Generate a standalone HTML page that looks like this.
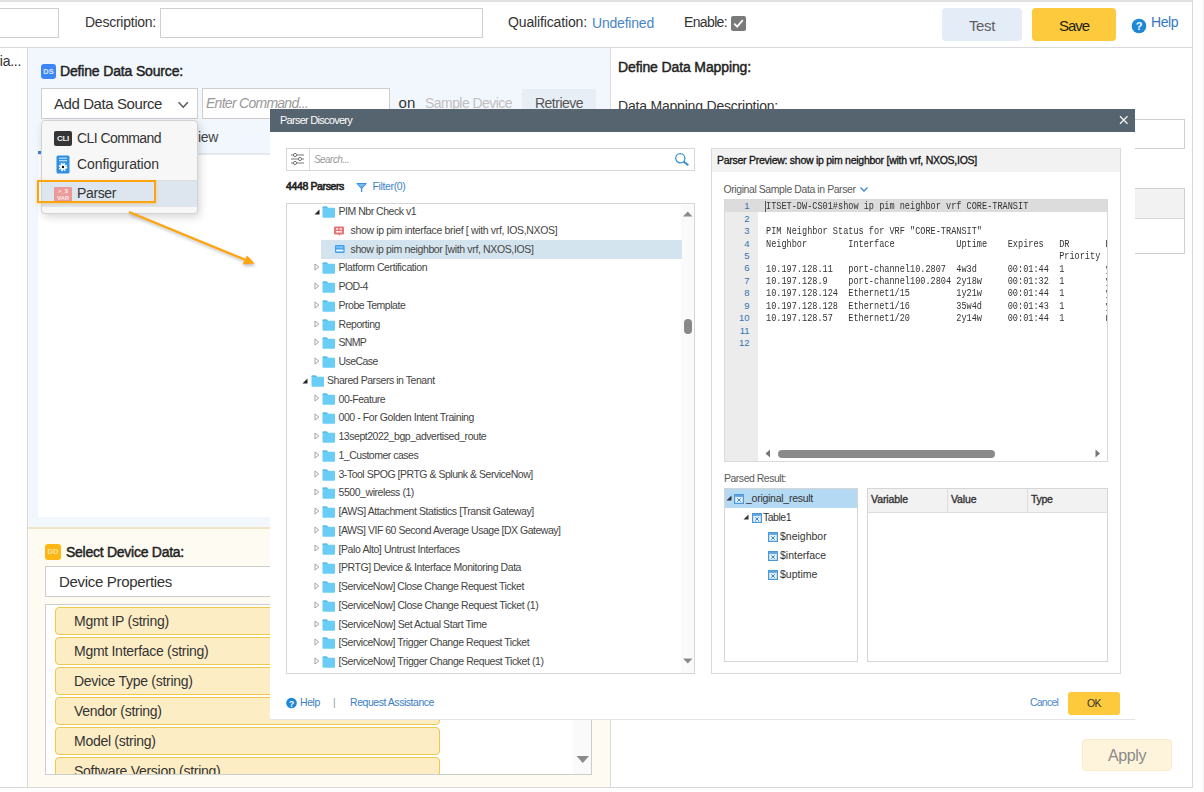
<!DOCTYPE html>
<html><head><meta charset="utf-8"><title>Parser Discovery</title><style>html,body{margin:0;padding:0;}
body{width:1204px;height:792px;position:relative;overflow:hidden;background:#fff;font-family:"Liberation Sans", sans-serif;}
.b{position:absolute;box-sizing:border-box;}
.t{position:absolute;white-space:pre;line-height:1;}
</style></head><body>
<div class="b" style="left:0px;top:0px;width:1193px;height:2px;background:#e0e0e0;"></div>
<div class="b" style="left:1203px;top:0px;width:1px;height:792px;background:#f1f1f1;"></div>
<div class="b" style="left:-2px;top:8px;width:61px;height:30px;background:#fff;border:1px solid #cfcfcf;"></div>
<div class="t" style="left:85px;top:15.15px;font-size:14px;color:#333;letter-spacing:-0.243px;">Description:</div>
<div class="b" style="left:160px;top:8px;width:323px;height:30px;background:#fff;border:1px solid #cfcfcf;"></div>
<div class="t" style="left:508px;top:15.15px;font-size:14px;color:#333;letter-spacing:-0.138px;">Qualification:</div>
<div class="t" style="left:592px;top:16.15px;font-size:14px;color:#4a86c5;letter-spacing:-0.203px;">Undefined</div>
<div class="t" style="left:684px;top:15.15px;font-size:14px;color:#333;letter-spacing:-0.641px;">Enable:</div>
<div class="b" style="left:731px;top:16px;width:15px;height:15px;background:#7a7a7a;border-radius:2px;"><svg width="15" height="15" style="position:absolute;left:0;top:0"><path d="M3.2 7.6 L6.2 10.6 L11.8 4.2" stroke="#fff" stroke-width="1.8" fill="none"/></svg></div>
<div class="b" style="left:942px;top:8px;width:80px;height:33px;background:#e4ecf8;border-radius:4px;"></div>
<div class="t" style="left:969px;top:18.30px;font-size:15px;color:#5f5f5f;letter-spacing:-0.379px;">Test</div>
<div class="b" style="left:1032px;top:8px;width:84px;height:33px;background:#fdc93d;border-radius:4px;"></div>
<div class="t" style="left:1059px;top:18.30px;font-size:15px;color:#222;letter-spacing:-1.051px;">Save</div>
<svg class="b" style="left:1131px;top:18px" width="16" height="16"><circle cx="8" cy="8" r="7.3" fill="#1e88d8"/><text x="8" y="12.3" font-size="11" font-weight="700" fill="#fff" text-anchor="middle" font-family="Liberation Sans">?</text></svg>
<div class="t" style="left:1151px;top:15.45px;font-size:14px;color:#3578c0;letter-spacing:-0.449px;">Help</div>
<div class="b" style="left:0px;top:47px;width:1193px;height:1px;background:#d9d9d9;"></div>
<div class="b" style="left:1192px;top:1px;width:1px;height:787px;background:#d9d9d9;"></div>
<div class="b" style="left:0px;top:787px;width:1193px;height:1px;background:#d9d9d9;"></div>
<div class="b" style="left:27px;top:48px;width:1px;height:740px;background:#d9d9d9;"></div>
<div class="t" style="left:-4.5px;top:54.15px;font-size:14px;color:#333;letter-spacing:-0.289px;">ria...</div>
<div class="b" style="left:28px;top:48px;width:582px;height:479px;background:#f2f7fd;"></div>
<div class="b" style="left:610px;top:48px;width:1px;height:740px;background:#dcdcdc;"></div>
<div class="b" style="left:38px;top:155px;width:561px;height:362px;background:#fff;"></div>
<div class="b" style="left:38px;top:153px;width:561px;height:2px;background:#e4e8ed;"></div>
<div class="b" style="left:38px;top:151px;width:4px;height:3px;background:#3a86d6;"></div>
<div class="t" style="left:198px;top:130.15px;font-size:14px;color:#444;letter-spacing:-0.339px;">iew</div>
<div class="b" style="left:41px;top:64px;width:15px;height:15px;background:#3d86f8;border-radius:3px;"><div style="position:absolute;left:0;top:3.5px;width:15px;text-align:center;font:bold 7.5px Liberation Sans;color:#dce9fd;line-height:8px">DS</div></div>
<div class="t" style="left:60px;top:64.15px;font-size:14px;color:#222;letter-spacing:-0.162px;-webkit-text-stroke:0.45px #222;">Define Data Source:</div>
<div class="b" style="left:41px;top:88px;width:157px;height:31px;background:#fff;border:1px solid #cdcdcd;"></div>
<div class="t" style="left:54px;top:95.80px;font-size:15px;color:#333;letter-spacing:-0.417px;">Add Data Source</div>
<svg class="b" style="left:176px;top:99px" width="14" height="11"><path d="M2.6 3.3 L7.2 8.2 L11.8 3.3" stroke="#555" stroke-width="1.4" fill="none"/></svg>
<div class="b" style="left:202px;top:88px;width:188px;height:31px;background:#fff;border:1px solid #cdcdcd;"></div>
<div class="t" style="left:206px;top:96.15px;font-size:14px;color:#9a9a9a;font-style:italic;letter-spacing:-0.726px;">Enter Command...</div>
<div class="t" style="left:398.5px;top:95.30px;font-size:15px;color:#333;letter-spacing:0.156px;">on</div>
<div class="t" style="left:425px;top:96.15px;font-size:14px;color:#c0c0c0;letter-spacing:-0.550px;">Sample Device</div>
<div class="b" style="left:522px;top:89px;width:74px;height:30px;background:#e8eef6;border-radius:3px;"></div>
<div class="t" style="left:535px;top:96.15px;font-size:14px;color:#555;letter-spacing:-0.518px;">Retrieve</div>
<div class="b" style="left:28px;top:527px;width:582px;height:260px;background:#fefbf3;"></div>
<div class="b" style="left:28px;top:527px;width:582px;height:2px;background:#f1e4c6;"></div>
<div class="b" style="left:45px;top:544px;width:16px;height:16px;background:#fdb715;border-radius:3px;"><div style="position:absolute;left:0;top:4px;width:16px;text-align:center;font:bold 7.5px Liberation Sans;color:#fde3a0;line-height:8px">DD</div></div>
<div class="t" style="left:66px;top:545.15px;font-size:14px;color:#222;letter-spacing:-0.261px;-webkit-text-stroke:0.45px #222;">Select Device Data:</div>
<div class="b" style="left:45px;top:566px;width:548px;height:31px;background:#fff;border:1px solid #cdcdcd;"></div>
<div class="t" style="left:59px;top:574.30px;font-size:15px;color:#333;letter-spacing:-0.317px;">Device Properties</div>
<div class="b" style="left:45px;top:604px;width:547px;height:171px;background:#fff;border:1px solid #cdcdcd;"></div>
<div class="b" style="left:573px;top:605px;width:18px;height:169px;background:#fafafa;"></div>
<svg class="b" style="left:576px;top:756px" width="14" height="8"><path d="M0.5 0 L13 0 L6.75 7 Z" fill="#8a8a8a"/></svg>
<div class="b" style="left:46px;top:605px;width:527px;height:169px;overflow:hidden">
<div class="b" style="left:9px;top:2px;width:385px;height:28px;box-sizing:border-box;background:#fdedc4;border:1px solid #efc94c;border-radius:4px"></div>
<div class="t" style="left:28px;top:8.65px;font-size:14px;color:#333;letter-spacing:-0.279px;">Mgmt IP (string)</div>
<div class="b" style="left:9px;top:32px;width:385px;height:28px;box-sizing:border-box;background:#fdedc4;border:1px solid #efc94c;border-radius:4px"></div>
<div class="t" style="left:28px;top:38.65px;font-size:14px;color:#333;letter-spacing:-0.276px;">Mgmt Interface (string)</div>
<div class="b" style="left:9px;top:62px;width:385px;height:28px;box-sizing:border-box;background:#fdedc4;border:1px solid #efc94c;border-radius:4px"></div>
<div class="t" style="left:28px;top:68.65px;font-size:14px;color:#333;letter-spacing:-0.280px;">Device Type (string)</div>
<div class="b" style="left:9px;top:92px;width:385px;height:28px;box-sizing:border-box;background:#fdedc4;border:1px solid #efc94c;border-radius:4px"></div>
<div class="t" style="left:28px;top:98.65px;font-size:14px;color:#333;letter-spacing:-0.275px;">Vendor (string)</div>
<div class="b" style="left:9px;top:122px;width:385px;height:28px;box-sizing:border-box;background:#fdedc4;border:1px solid #efc94c;border-radius:4px"></div>
<div class="t" style="left:28px;top:128.65px;font-size:14px;color:#333;letter-spacing:-0.275px;">Model (string)</div>
<div class="b" style="left:9px;top:152px;width:385px;height:28px;box-sizing:border-box;background:#fdedc4;border:1px solid #efc94c;border-radius:4px"></div>
<div class="t" style="left:28px;top:158.65px;font-size:14px;color:#333;letter-spacing:-0.276px;">Software Version (string)</div>
</div>
<div class="t" style="left:618px;top:59.65px;font-size:14px;color:#222;letter-spacing:-0.121px;-webkit-text-stroke:0.45px #222;">Define Data Mapping:</div>
<div class="t" style="left:618px;top:99.15px;font-size:14px;color:#333;letter-spacing:-0.199px;">Data Mapping Description:</div>
<div class="b" style="left:1050px;top:119px;width:135px;height:30px;background:#fff;border:1px solid #cfcfcf;"></div>
<div class="b" style="left:1050px;top:188px;width:135px;height:66px;background:#fff;border:1px solid #cfcfcf;"></div>
<div class="b" style="left:1051px;top:189px;width:133px;height:30px;background:#f2f2f2;"></div>
<div class="b" style="left:1051px;top:218px;width:133px;height:1px;background:#d8d8d8;"></div>
<div class="b" style="left:1082px;top:739px;width:90px;height:32px;background:#fef4dc;border:1px solid #fcebc6;border-radius:4px;"></div>
<div class="t" style="left:1108px;top:748.46px;font-size:16px;color:#8a8a8a;letter-spacing:-0.406px;">Apply</div>
<div class="b" style="left:41px;top:120px;width:157px;height:94px;box-sizing:border-box;background:#f7f7f7;border:1px solid #d2d2d2;border-radius:4px;box-shadow:2px 3px 8px rgba(0,0,0,0.16)"></div>
<div class="b" style="left:54px;top:131px;width:18px;height:15px;background:#353535;border-radius:2px;"><div style="position:absolute;left:0;top:3.5px;width:18px;text-align:center;font:bold 8px Liberation Sans;color:#eee;line-height:8px;letter-spacing:-0.3px">CLI</div></div>
<div class="t" style="left:77px;top:131.15px;font-size:14px;color:#333;letter-spacing:-0.570px;">CLI Command</div>
<svg class="b" style="left:56px;top:155px" width="14" height="19"><rect x="0.5" y="0.5" width="13" height="18" rx="1.5" fill="#2f8fe0"/><rect x="3" y="2.6" width="8" height="1.3" fill="#b5d8f7"/><rect x="3" y="5" width="8" height="1.3" fill="#b5d8f7"/><circle cx="7" cy="12" r="3" fill="#fff"/><circle cx="7" cy="12" r="3.6" fill="none" stroke="#fff" stroke-width="1.3" stroke-dasharray="1.7 1.13"/><circle cx="7" cy="12" r="1.2" fill="#111"/></svg>
<div class="t" style="left:77px;top:157.15px;font-size:14px;color:#333;letter-spacing:-0.099px;">Configuration</div>
<div class="b" style="left:42px;top:180px;width:155px;height:1px;background:#dedede;"></div>
<div class="b" style="left:42px;top:181px;width:155px;height:26px;background:#dde6ee;"></div>
<div class="b" style="left:54px;top:187px;width:18px;height:15px;background:#ea9a9a;border-radius:1px;"><div style="position:absolute;left:0;top:1px;width:18px;text-align:center;font:bold 6px Liberation Sans;color:#fde8e8;line-height:6.5px">&gt;_$<br>VAR</div></div>
<div class="t" style="left:77px;top:186.15px;font-size:14px;color:#333;letter-spacing:-0.372px;">Parser</div>
<div class="b" style="left:37px;top:180px;width:119px;height:23px;border:2px solid #fda40f;box-shadow:0 1px 3px rgba(246,162,30,0.4);"></div>
<svg class="b" style="left:0;top:0;filter:drop-shadow(1px 2px 1.5px rgba(0,0,0,0.25))" width="300" height="300"><line x1="129" y1="212" x2="247" y2="260.5" stroke="#fda40f" stroke-width="2.4"/><path d="M254.5 263.5 L242.5 264.5 L247 255.5 Z" fill="#fda40f"/></svg>
<div class="b" style="left:270px;top:109px;width:865px;height:610px;background:#fff;"></div>
<div class="b" style="left:270px;top:109px;width:865px;height:23px;background:#566470;"></div>
<div class="t" style="left:280px;top:114.69px;font-size:11px;color:#fff;letter-spacing:-0.734px;">Parser Discovery</div>
<svg class="b" style="left:1119px;top:115px" width="10" height="10"><path d="M1 1.2 L8.5 8.8 M8.5 1.2 L1 8.8" stroke="#f4f4f4" stroke-width="1.3"/></svg>
<div class="b" style="left:286px;top:148px;width:409px;height:23px;background:#fff;border:1px solid #d6d6d6;"></div>
<div class="b" style="left:309px;top:149px;width:1px;height:21px;background:#dcdcdc;"></div>
<svg class="b" style="left:291px;top:153px" width="14" height="12"><g stroke="#777" stroke-width="1" fill="#fff"><line x1="0" y1="2" x2="13" y2="2"/><line x1="0" y1="6" x2="13" y2="6"/><line x1="0" y1="10" x2="13" y2="10"/><circle cx="4" cy="2" r="1.6"/><circle cx="9" cy="6" r="1.6"/><circle cx="4" cy="10" r="1.6"/></g></svg>
<div class="t" style="left:314px;top:154.53px;font-size:10px;color:#9a9a9a;font-style:italic;letter-spacing:-0.559px;">Search...</div>
<svg class="b" style="left:674px;top:151.5px" width="16" height="16"><circle cx="6.3" cy="6.2" r="4.6" stroke="#3d95cf" stroke-width="1.3" fill="none"/><line x1="9.6" y1="9.6" x2="14.3" y2="13.3" stroke="#3d95cf" stroke-width="2"/></svg>
<div class="t" style="left:286px;top:181.11px;font-size:10.5px;color:#222;letter-spacing:-0.371px;-webkit-text-stroke:0.6px #222;">4448 Parsers</div>
<svg class="b" style="left:356px;top:182px" width="12" height="12"><path d="M1 1.5 L10.2 1.5 L5.6 6.5 Z" fill="#78b8f4" stroke="#3d8fe0" stroke-width="1.1" stroke-linejoin="round"/><rect x="4.95" y="6" width="1.3" height="4" fill="#3d8fe0"/></svg>
<div class="t" style="left:372.5px;top:181.11px;font-size:10.5px;color:#3d84c6;letter-spacing:-0.352px;">Filter(0)</div>
<div class="b" style="left:286px;top:203px;width:409px;height:471px;background:#fff;border:1px solid #d6d6d6;"></div>
<div class="b" style="left:681px;top:205px;width:13px;height:468px;background:#fafafa;"></div>
<svg class="b" style="left:683px;top:211px" width="10" height="6"><path d="M0 5.5 L9.5 5.5 L4.75 0.5 Z" fill="#8a8a8a"/></svg>
<svg class="b" style="left:683px;top:658px" width="10" height="6"><path d="M0 0.5 L9.5 0.5 L4.75 5.5 Z" fill="#8a8a8a"/></svg>
<div class="b" style="left:684px;top:319px;width:8px;height:15px;background:#888;border-radius:4px;"></div>
<div class="b" style="left:321px;top:240px;width:361px;height:19px;background:#d4e4ee;"></div>
<svg class="b" style="left:314px;top:209px" width="6" height="6"><path d="M5.5 0.5 L5.5 5.5 L0.5 5.5 Z" fill="#222"/></svg>
<svg class="b" style="left:322px;top:206px" width="14" height="12"><path d="M0.5 1.5 Q0.5 0.5 1.5 0.5 L4.8 0.5 L6 1.8 L12.2 1.8 Q13 1.8 13 2.8 L13 10.8 Q13 11.8 12 11.8 L1.5 11.8 Q0.5 11.8 0.5 10.8 Z" fill="#6acdf6"/><path d="M0.5 1.5 Q0.5 0.5 1.5 0.5 L4.8 0.5 L6 1.8 L0.5 1.8 Z" fill="#55b6e6"/></svg>
<div class="t" style="left:338.5px;top:206.11px;font-size:10.5px;color:#444;letter-spacing:-0.479px;">PIM Nbr Check v1</div>
<svg class="b" style="left:334px;top:226px" width="11" height="11"><path d="M1 0.5 L9 0.5 Q10 0.5 10 1.5 L10 7.5 Q10 8.5 9 8.5 L6.3 8.5 L5.2 9.8 L4.6 8.5 L1 8.5 Q0 8.5 0 7.5 L0 1.5 Q0 0.5 1 0.5 Z" fill="#e27676"/><rect x="2" y="2.2" width="2" height="1.6" fill="#fbe3e3"/><rect x="5.5" y="2.2" width="2.5" height="1.6" fill="#fbe3e3"/><rect x="2" y="5" width="6" height="1.6" fill="#fbe3e3"/></svg>
<div class="t" style="left:350.5px;top:224.86px;font-size:10.5px;color:#444;letter-spacing:-0.342px;">show ip pim interface brief [ with vrf, IOS,NXOS]</div>
<svg class="b" style="left:334.5px;top:245px" width="10" height="9"><rect x="0" y="0" width="9.6" height="8" rx="1" fill="#3f9ff0"/><rect x="1.2" y="1.2" width="7" height="2" fill="#7cc2f7"/><rect x="1.2" y="4.5" width="7.2" height="2" fill="#fff" opacity="0.9"/></svg>
<div class="t" style="left:350.5px;top:243.61px;font-size:10.5px;color:#444;letter-spacing:-0.362px;">show ip pim neighbor [with vrf, NXOS,IOS]</div>
<svg class="b" style="left:314px;top:263px" width="6" height="8"><path d="M1 1 L4.8 4 L1 7 Z" stroke="#999" stroke-width="0.9" fill="#fff"/></svg>
<svg class="b" style="left:322px;top:262px" width="14" height="12"><path d="M0.5 1.5 Q0.5 0.5 1.5 0.5 L4.8 0.5 L6 1.8 L12.2 1.8 Q13 1.8 13 2.8 L13 10.8 Q13 11.8 12 11.8 L1.5 11.8 Q0.5 11.8 0.5 10.8 Z" fill="#6acdf6"/><path d="M0.5 1.5 Q0.5 0.5 1.5 0.5 L4.8 0.5 L6 1.8 L0.5 1.8 Z" fill="#55b6e6"/></svg>
<div class="t" style="left:338.5px;top:262.36px;font-size:10.5px;color:#444;letter-spacing:-0.399px;">Platform Certification</div>
<svg class="b" style="left:314px;top:282px" width="6" height="8"><path d="M1 1 L4.8 4 L1 7 Z" stroke="#999" stroke-width="0.9" fill="#fff"/></svg>
<svg class="b" style="left:322px;top:281px" width="14" height="12"><path d="M0.5 1.5 Q0.5 0.5 1.5 0.5 L4.8 0.5 L6 1.8 L12.2 1.8 Q13 1.8 13 2.8 L13 10.8 Q13 11.8 12 11.8 L1.5 11.8 Q0.5 11.8 0.5 10.8 Z" fill="#6acdf6"/><path d="M0.5 1.5 Q0.5 0.5 1.5 0.5 L4.8 0.5 L6 1.8 L0.5 1.8 Z" fill="#55b6e6"/></svg>
<div class="t" style="left:338.5px;top:281.11px;font-size:10.5px;color:#444;letter-spacing:-0.578px;">POD-4</div>
<svg class="b" style="left:314px;top:301px" width="6" height="8"><path d="M1 1 L4.8 4 L1 7 Z" stroke="#999" stroke-width="0.9" fill="#fff"/></svg>
<svg class="b" style="left:322px;top:300px" width="14" height="12"><path d="M0.5 1.5 Q0.5 0.5 1.5 0.5 L4.8 0.5 L6 1.8 L12.2 1.8 Q13 1.8 13 2.8 L13 10.8 Q13 11.8 12 11.8 L1.5 11.8 Q0.5 11.8 0.5 10.8 Z" fill="#6acdf6"/><path d="M0.5 1.5 Q0.5 0.5 1.5 0.5 L4.8 0.5 L6 1.8 L0.5 1.8 Z" fill="#55b6e6"/></svg>
<div class="t" style="left:338.5px;top:299.86px;font-size:10.5px;color:#444;letter-spacing:-0.472px;">Probe Template</div>
<svg class="b" style="left:314px;top:320px" width="6" height="8"><path d="M1 1 L4.8 4 L1 7 Z" stroke="#999" stroke-width="0.9" fill="#fff"/></svg>
<svg class="b" style="left:322px;top:319px" width="14" height="12"><path d="M0.5 1.5 Q0.5 0.5 1.5 0.5 L4.8 0.5 L6 1.8 L12.2 1.8 Q13 1.8 13 2.8 L13 10.8 Q13 11.8 12 11.8 L1.5 11.8 Q0.5 11.8 0.5 10.8 Z" fill="#6acdf6"/><path d="M0.5 1.5 Q0.5 0.5 1.5 0.5 L4.8 0.5 L6 1.8 L0.5 1.8 Z" fill="#55b6e6"/></svg>
<div class="t" style="left:338.5px;top:318.61px;font-size:10.5px;color:#444;letter-spacing:-0.455px;">Reporting</div>
<svg class="b" style="left:314px;top:338px" width="6" height="8"><path d="M1 1 L4.8 4 L1 7 Z" stroke="#999" stroke-width="0.9" fill="#fff"/></svg>
<svg class="b" style="left:322px;top:337px" width="14" height="12"><path d="M0.5 1.5 Q0.5 0.5 1.5 0.5 L4.8 0.5 L6 1.8 L12.2 1.8 Q13 1.8 13 2.8 L13 10.8 Q13 11.8 12 11.8 L1.5 11.8 Q0.5 11.8 0.5 10.8 Z" fill="#6acdf6"/><path d="M0.5 1.5 Q0.5 0.5 1.5 0.5 L4.8 0.5 L6 1.8 L0.5 1.8 Z" fill="#55b6e6"/></svg>
<div class="t" style="left:338.5px;top:337.36px;font-size:10.5px;color:#444;letter-spacing:-0.683px;">SNMP</div>
<svg class="b" style="left:314px;top:357px" width="6" height="8"><path d="M1 1 L4.8 4 L1 7 Z" stroke="#999" stroke-width="0.9" fill="#fff"/></svg>
<svg class="b" style="left:322px;top:356px" width="14" height="12"><path d="M0.5 1.5 Q0.5 0.5 1.5 0.5 L4.8 0.5 L6 1.8 L12.2 1.8 Q13 1.8 13 2.8 L13 10.8 Q13 11.8 12 11.8 L1.5 11.8 Q0.5 11.8 0.5 10.8 Z" fill="#6acdf6"/><path d="M0.5 1.5 Q0.5 0.5 1.5 0.5 L4.8 0.5 L6 1.8 L0.5 1.8 Z" fill="#55b6e6"/></svg>
<div class="t" style="left:338.5px;top:356.11px;font-size:10.5px;color:#444;letter-spacing:-0.555px;">UseCase</div>
<svg class="b" style="left:302px;top:378px" width="6" height="6"><path d="M5.5 0.5 L5.5 5.5 L0.5 5.5 Z" fill="#222"/></svg>
<svg class="b" style="left:311px;top:375px" width="14" height="12"><path d="M0.5 1.5 Q0.5 0.5 1.5 0.5 L4.8 0.5 L6 1.8 L12.2 1.8 Q13 1.8 13 2.8 L13 10.8 Q13 11.8 12 11.8 L1.5 11.8 Q0.5 11.8 0.5 10.8 Z" fill="#6acdf6"/><path d="M0.5 1.5 Q0.5 0.5 1.5 0.5 L4.8 0.5 L6 1.8 L0.5 1.8 Z" fill="#55b6e6"/></svg>
<div class="t" style="left:327px;top:374.86px;font-size:10.5px;color:#444;letter-spacing:-0.444px;">Shared Parsers in Tenant</div>
<svg class="b" style="left:314px;top:394px" width="6" height="8"><path d="M1 1 L4.8 4 L1 7 Z" stroke="#999" stroke-width="0.9" fill="#fff"/></svg>
<svg class="b" style="left:322px;top:393px" width="14" height="12"><path d="M0.5 1.5 Q0.5 0.5 1.5 0.5 L4.8 0.5 L6 1.8 L12.2 1.8 Q13 1.8 13 2.8 L13 10.8 Q13 11.8 12 11.8 L1.5 11.8 Q0.5 11.8 0.5 10.8 Z" fill="#6acdf6"/><path d="M0.5 1.5 Q0.5 0.5 1.5 0.5 L4.8 0.5 L6 1.8 L0.5 1.8 Z" fill="#55b6e6"/></svg>
<div class="t" style="left:338.5px;top:393.61px;font-size:10.5px;color:#444;letter-spacing:-0.462px;">00-Feature</div>
<svg class="b" style="left:314px;top:413px" width="6" height="8"><path d="M1 1 L4.8 4 L1 7 Z" stroke="#999" stroke-width="0.9" fill="#fff"/></svg>
<svg class="b" style="left:322px;top:412px" width="14" height="12"><path d="M0.5 1.5 Q0.5 0.5 1.5 0.5 L4.8 0.5 L6 1.8 L12.2 1.8 Q13 1.8 13 2.8 L13 10.8 Q13 11.8 12 11.8 L1.5 11.8 Q0.5 11.8 0.5 10.8 Z" fill="#6acdf6"/><path d="M0.5 1.5 Q0.5 0.5 1.5 0.5 L4.8 0.5 L6 1.8 L0.5 1.8 Z" fill="#55b6e6"/></svg>
<div class="t" style="left:338.5px;top:412.36px;font-size:10.5px;color:#444;letter-spacing:-0.419px;">000 - For Golden Intent Training</div>
<svg class="b" style="left:314px;top:432px" width="6" height="8"><path d="M1 1 L4.8 4 L1 7 Z" stroke="#999" stroke-width="0.9" fill="#fff"/></svg>
<svg class="b" style="left:322px;top:431px" width="14" height="12"><path d="M0.5 1.5 Q0.5 0.5 1.5 0.5 L4.8 0.5 L6 1.8 L12.2 1.8 Q13 1.8 13 2.8 L13 10.8 Q13 11.8 12 11.8 L1.5 11.8 Q0.5 11.8 0.5 10.8 Z" fill="#6acdf6"/><path d="M0.5 1.5 Q0.5 0.5 1.5 0.5 L4.8 0.5 L6 1.8 L0.5 1.8 Z" fill="#55b6e6"/></svg>
<div class="t" style="left:338.5px;top:431.11px;font-size:10.5px;color:#444;letter-spacing:-0.471px;">13sept2022_bgp_advertised_route</div>
<svg class="b" style="left:314px;top:451px" width="6" height="8"><path d="M1 1 L4.8 4 L1 7 Z" stroke="#999" stroke-width="0.9" fill="#fff"/></svg>
<svg class="b" style="left:322px;top:450px" width="14" height="12"><path d="M0.5 1.5 Q0.5 0.5 1.5 0.5 L4.8 0.5 L6 1.8 L12.2 1.8 Q13 1.8 13 2.8 L13 10.8 Q13 11.8 12 11.8 L1.5 11.8 Q0.5 11.8 0.5 10.8 Z" fill="#6acdf6"/><path d="M0.5 1.5 Q0.5 0.5 1.5 0.5 L4.8 0.5 L6 1.8 L0.5 1.8 Z" fill="#55b6e6"/></svg>
<div class="t" style="left:338.5px;top:449.86px;font-size:10.5px;color:#444;letter-spacing:-0.492px;">1_Customer cases</div>
<svg class="b" style="left:314px;top:470px" width="6" height="8"><path d="M1 1 L4.8 4 L1 7 Z" stroke="#999" stroke-width="0.9" fill="#fff"/></svg>
<svg class="b" style="left:322px;top:469px" width="14" height="12"><path d="M0.5 1.5 Q0.5 0.5 1.5 0.5 L4.8 0.5 L6 1.8 L12.2 1.8 Q13 1.8 13 2.8 L13 10.8 Q13 11.8 12 11.8 L1.5 11.8 Q0.5 11.8 0.5 10.8 Z" fill="#6acdf6"/><path d="M0.5 1.5 Q0.5 0.5 1.5 0.5 L4.8 0.5 L6 1.8 L0.5 1.8 Z" fill="#55b6e6"/></svg>
<div class="t" style="left:338.5px;top:468.61px;font-size:10.5px;color:#444;letter-spacing:-0.480px;">3-Tool SPOG [PRTG &amp; Splunk &amp; ServiceNow]</div>
<svg class="b" style="left:314px;top:488px" width="6" height="8"><path d="M1 1 L4.8 4 L1 7 Z" stroke="#999" stroke-width="0.9" fill="#fff"/></svg>
<svg class="b" style="left:322px;top:487px" width="14" height="12"><path d="M0.5 1.5 Q0.5 0.5 1.5 0.5 L4.8 0.5 L6 1.8 L12.2 1.8 Q13 1.8 13 2.8 L13 10.8 Q13 11.8 12 11.8 L1.5 11.8 Q0.5 11.8 0.5 10.8 Z" fill="#6acdf6"/><path d="M0.5 1.5 Q0.5 0.5 1.5 0.5 L4.8 0.5 L6 1.8 L0.5 1.8 Z" fill="#55b6e6"/></svg>
<div class="t" style="left:338.5px;top:487.36px;font-size:10.5px;color:#444;letter-spacing:-0.439px;">5500_wireless (1)</div>
<svg class="b" style="left:314px;top:507px" width="6" height="8"><path d="M1 1 L4.8 4 L1 7 Z" stroke="#999" stroke-width="0.9" fill="#fff"/></svg>
<svg class="b" style="left:322px;top:506px" width="14" height="12"><path d="M0.5 1.5 Q0.5 0.5 1.5 0.5 L4.8 0.5 L6 1.8 L12.2 1.8 Q13 1.8 13 2.8 L13 10.8 Q13 11.8 12 11.8 L1.5 11.8 Q0.5 11.8 0.5 10.8 Z" fill="#6acdf6"/><path d="M0.5 1.5 Q0.5 0.5 1.5 0.5 L4.8 0.5 L6 1.8 L0.5 1.8 Z" fill="#55b6e6"/></svg>
<div class="t" style="left:338.5px;top:506.11px;font-size:10.5px;color:#444;letter-spacing:-0.429px;">[AWS] Attachment Statistics [Transit Gateway]</div>
<svg class="b" style="left:314px;top:526px" width="6" height="8"><path d="M1 1 L4.8 4 L1 7 Z" stroke="#999" stroke-width="0.9" fill="#fff"/></svg>
<svg class="b" style="left:322px;top:525px" width="14" height="12"><path d="M0.5 1.5 Q0.5 0.5 1.5 0.5 L4.8 0.5 L6 1.8 L12.2 1.8 Q13 1.8 13 2.8 L13 10.8 Q13 11.8 12 11.8 L1.5 11.8 Q0.5 11.8 0.5 10.8 Z" fill="#6acdf6"/><path d="M0.5 1.5 Q0.5 0.5 1.5 0.5 L4.8 0.5 L6 1.8 L0.5 1.8 Z" fill="#55b6e6"/></svg>
<div class="t" style="left:338.5px;top:524.86px;font-size:10.5px;color:#444;letter-spacing:-0.477px;">[AWS] VIF 60 Second Average Usage [DX Gateway]</div>
<svg class="b" style="left:314px;top:544px" width="6" height="8"><path d="M1 1 L4.8 4 L1 7 Z" stroke="#999" stroke-width="0.9" fill="#fff"/></svg>
<svg class="b" style="left:322px;top:543px" width="14" height="12"><path d="M0.5 1.5 Q0.5 0.5 1.5 0.5 L4.8 0.5 L6 1.8 L12.2 1.8 Q13 1.8 13 2.8 L13 10.8 Q13 11.8 12 11.8 L1.5 11.8 Q0.5 11.8 0.5 10.8 Z" fill="#6acdf6"/><path d="M0.5 1.5 Q0.5 0.5 1.5 0.5 L4.8 0.5 L6 1.8 L0.5 1.8 Z" fill="#55b6e6"/></svg>
<div class="t" style="left:338.5px;top:543.61px;font-size:10.5px;color:#444;letter-spacing:-0.399px;">[Palo Alto] Untrust Interfaces</div>
<svg class="b" style="left:314px;top:563px" width="6" height="8"><path d="M1 1 L4.8 4 L1 7 Z" stroke="#999" stroke-width="0.9" fill="#fff"/></svg>
<svg class="b" style="left:322px;top:562px" width="14" height="12"><path d="M0.5 1.5 Q0.5 0.5 1.5 0.5 L4.8 0.5 L6 1.8 L12.2 1.8 Q13 1.8 13 2.8 L13 10.8 Q13 11.8 12 11.8 L1.5 11.8 Q0.5 11.8 0.5 10.8 Z" fill="#6acdf6"/><path d="M0.5 1.5 Q0.5 0.5 1.5 0.5 L4.8 0.5 L6 1.8 L0.5 1.8 Z" fill="#55b6e6"/></svg>
<div class="t" style="left:338.5px;top:562.36px;font-size:10.5px;color:#444;letter-spacing:-0.440px;">[PRTG] Device &amp; Interface Monitoring Data</div>
<svg class="b" style="left:314px;top:582px" width="6" height="8"><path d="M1 1 L4.8 4 L1 7 Z" stroke="#999" stroke-width="0.9" fill="#fff"/></svg>
<svg class="b" style="left:322px;top:581px" width="14" height="12"><path d="M0.5 1.5 Q0.5 0.5 1.5 0.5 L4.8 0.5 L6 1.8 L12.2 1.8 Q13 1.8 13 2.8 L13 10.8 Q13 11.8 12 11.8 L1.5 11.8 Q0.5 11.8 0.5 10.8 Z" fill="#6acdf6"/><path d="M0.5 1.5 Q0.5 0.5 1.5 0.5 L4.8 0.5 L6 1.8 L0.5 1.8 Z" fill="#55b6e6"/></svg>
<div class="t" style="left:338.5px;top:581.11px;font-size:10.5px;color:#444;letter-spacing:-0.458px;">[ServiceNow] Close Change Request Ticket</div>
<svg class="b" style="left:314px;top:601px" width="6" height="8"><path d="M1 1 L4.8 4 L1 7 Z" stroke="#999" stroke-width="0.9" fill="#fff"/></svg>
<svg class="b" style="left:322px;top:600px" width="14" height="12"><path d="M0.5 1.5 Q0.5 0.5 1.5 0.5 L4.8 0.5 L6 1.8 L12.2 1.8 Q13 1.8 13 2.8 L13 10.8 Q13 11.8 12 11.8 L1.5 11.8 Q0.5 11.8 0.5 10.8 Z" fill="#6acdf6"/><path d="M0.5 1.5 Q0.5 0.5 1.5 0.5 L4.8 0.5 L6 1.8 L0.5 1.8 Z" fill="#55b6e6"/></svg>
<div class="t" style="left:338.5px;top:599.86px;font-size:10.5px;color:#444;letter-spacing:-0.449px;">[ServiceNow] Close Change Request Ticket (1)</div>
<svg class="b" style="left:314px;top:620px" width="6" height="8"><path d="M1 1 L4.8 4 L1 7 Z" stroke="#999" stroke-width="0.9" fill="#fff"/></svg>
<svg class="b" style="left:322px;top:619px" width="14" height="12"><path d="M0.5 1.5 Q0.5 0.5 1.5 0.5 L4.8 0.5 L6 1.8 L12.2 1.8 Q13 1.8 13 2.8 L13 10.8 Q13 11.8 12 11.8 L1.5 11.8 Q0.5 11.8 0.5 10.8 Z" fill="#6acdf6"/><path d="M0.5 1.5 Q0.5 0.5 1.5 0.5 L4.8 0.5 L6 1.8 L0.5 1.8 Z" fill="#55b6e6"/></svg>
<div class="t" style="left:338.5px;top:618.61px;font-size:10.5px;color:#444;letter-spacing:-0.431px;">[ServiceNow] Set Actual Start Time</div>
<svg class="b" style="left:314px;top:638px" width="6" height="8"><path d="M1 1 L4.8 4 L1 7 Z" stroke="#999" stroke-width="0.9" fill="#fff"/></svg>
<svg class="b" style="left:322px;top:637px" width="14" height="12"><path d="M0.5 1.5 Q0.5 0.5 1.5 0.5 L4.8 0.5 L6 1.8 L12.2 1.8 Q13 1.8 13 2.8 L13 10.8 Q13 11.8 12 11.8 L1.5 11.8 Q0.5 11.8 0.5 10.8 Z" fill="#6acdf6"/><path d="M0.5 1.5 Q0.5 0.5 1.5 0.5 L4.8 0.5 L6 1.8 L0.5 1.8 Z" fill="#55b6e6"/></svg>
<div class="t" style="left:338.5px;top:637.36px;font-size:10.5px;color:#444;letter-spacing:-0.449px;">[ServiceNow] Trigger Change Request Ticket</div>
<svg class="b" style="left:314px;top:657px" width="6" height="8"><path d="M1 1 L4.8 4 L1 7 Z" stroke="#999" stroke-width="0.9" fill="#fff"/></svg>
<svg class="b" style="left:322px;top:656px" width="14" height="12"><path d="M0.5 1.5 Q0.5 0.5 1.5 0.5 L4.8 0.5 L6 1.8 L12.2 1.8 Q13 1.8 13 2.8 L13 10.8 Q13 11.8 12 11.8 L1.5 11.8 Q0.5 11.8 0.5 10.8 Z" fill="#6acdf6"/><path d="M0.5 1.5 Q0.5 0.5 1.5 0.5 L4.8 0.5 L6 1.8 L0.5 1.8 Z" fill="#55b6e6"/></svg>
<div class="t" style="left:338.5px;top:656.11px;font-size:10.5px;color:#444;letter-spacing:-0.441px;">[ServiceNow] Trigger Change Request Ticket (1)</div>
<svg class="b" style="left:286px;top:697px" width="12" height="12"><circle cx="5.5" cy="6" r="5.3" fill="#1e88d8"/><text x="5.5" y="9.5" font-size="8.5" font-weight="700" fill="#fff" text-anchor="middle" font-family="Liberation Sans">?</text></svg>
<div class="t" style="left:300px;top:697.11px;font-size:10.5px;color:#3a80c4;letter-spacing:-0.402px;">Help</div>
<div class="t" style="left:333px;top:697.11px;font-size:10.5px;color:#999;">|</div>
<div class="t" style="left:350px;top:697.11px;font-size:10.5px;color:#3a80c4;letter-spacing:-0.457px;">Request Assistance</div>
<div class="t" style="left:1030px;top:697.11px;font-size:10.5px;color:#4a88c6;letter-spacing:-0.781px;">Cancel</div>
<div class="b" style="left:1068px;top:692px;width:52px;height:23px;background:#fdc93d;border-radius:3px;"></div>
<div class="b" style="left:270px;top:719px;width:865px;height:1px;background:#e3e4e9;"></div>
<div class="t" style="left:1087px;top:698.11px;font-size:10.5px;color:#333;letter-spacing:-0.586px;">OK</div>
<div class="b" style="left:711px;top:148px;width:410px;height:526px;background:#fff;border:1px solid #dadada;"></div>
<div class="b" style="left:712px;top:149px;width:408px;height:23px;background:#f2f2f2;"></div>
<div class="t" style="left:717px;top:155.11px;font-size:10.5px;color:#111;letter-spacing:-0.261px;-webkit-text-stroke:0.3px #111;">Parser Preview: show ip pim neighbor [with vrf, NXOS,IOS]</div>
<div class="t" style="left:723.5px;top:184.11px;font-size:10.5px;color:#5a5a5a;letter-spacing:-0.424px;">Original Sample Data in Parser</div>
<svg class="b" style="left:859px;top:186px" width="10" height="7"><path d="M1.5 1.5 L5 5 L8.5 1.5" stroke="#3a86d6" stroke-width="1.3" fill="none"/></svg>
<div class="b" style="left:724px;top:199px;width:384px;height:263px;background:#fff;border:1px solid #dadada;"></div>
<div class="b" style="left:725px;top:200px;width:33px;height:261px;background:#ececec;"></div>
<div class="b" style="left:725px;top:200px;width:382px;height:12px;background:#dcdcdc;"></div>
<div class="b" style="left:758px;top:200px;width:349px;height:248px;overflow:hidden">
<div class="t" style="left:7.7999999999999545px;top:1.30px;font-family:'Liberation Mono', monospace;font-size:10px;line-height:12px;color:#333;transform:scaleX(0.857);transform-origin:0 0">ITSET-DW-CS01#show ip pim neighbor vrf CORE-TRANSIT</div>
<div class="t" style="left:7.7999999999999545px;top:13.74px;font-family:'Liberation Mono', monospace;font-size:10px;line-height:12px;color:#333;transform:scaleX(0.857);transform-origin:0 0"></div>
<div class="t" style="left:7.7999999999999545px;top:26.18px;font-family:'Liberation Mono', monospace;font-size:10px;line-height:12px;color:#333;transform:scaleX(0.857);transform-origin:0 0">PIM Neighbor Status for VRF &quot;CORE-TRANSIT&quot;</div>
<div class="t" style="left:7.7999999999999545px;top:38.62px;font-family:'Liberation Mono', monospace;font-size:10px;line-height:12px;color:#333;transform:scaleX(0.857);transform-origin:0 0">Neighbor        Interface            Uptime    Expires   DR       B</div>
<div class="t" style="left:7.7999999999999545px;top:51.06px;font-family:'Liberation Mono', monospace;font-size:10px;line-height:12px;color:#333;transform:scaleX(0.857);transform-origin:0 0">                                                         Priority (</div>
<div class="t" style="left:7.7999999999999545px;top:63.50px;font-family:'Liberation Mono', monospace;font-size:10px;line-height:12px;color:#333;transform:scaleX(0.857);transform-origin:0 0">10.197.128.11   port-channel10.2807  4w3d      00:01:44  1        y</div>
<div class="t" style="left:7.7999999999999545px;top:75.94px;font-family:'Liberation Mono', monospace;font-size:10px;line-height:12px;color:#333;transform:scaleX(0.857);transform-origin:0 0">10.197.128.9    port-channel100.2804 2y18w     00:01:32  1        y</div>
<div class="t" style="left:7.7999999999999545px;top:88.38px;font-family:'Liberation Mono', monospace;font-size:10px;line-height:12px;color:#333;transform:scaleX(0.857);transform-origin:0 0">10.197.128.124  Ethernet1/15         1y21w     00:01:44  1        y</div>
<div class="t" style="left:7.7999999999999545px;top:100.82px;font-family:'Liberation Mono', monospace;font-size:10px;line-height:12px;color:#333;transform:scaleX(0.857);transform-origin:0 0">10.197.128.128  Ethernet1/16         35w4d     00:01:43  1        y</div>
<div class="t" style="left:7.7999999999999545px;top:113.26px;font-family:'Liberation Mono', monospace;font-size:10px;line-height:12px;color:#333;transform:scaleX(0.857);transform-origin:0 0">10.197.128.57   Ethernet1/20         2y14w     00:01:44  1        n</div>
<div class="t" style="left:7.7999999999999545px;top:125.70px;font-family:'Liberation Mono', monospace;font-size:10px;line-height:12px;color:#333;transform:scaleX(0.857);transform-origin:0 0"></div>
<div class="t" style="left:7.7999999999999545px;top:138.14px;font-family:'Liberation Mono', monospace;font-size:10px;line-height:12px;color:#333;transform:scaleX(0.857);transform-origin:0 0"></div>
</div>
<div class="t" style="left:725px;width:24.5px;text-align:right;top:200.20px;font-size:9.5px;line-height:12px;color:#3572b0">1</div>
<div class="t" style="left:725px;width:24.5px;text-align:right;top:212.64px;font-size:9.5px;line-height:12px;color:#3572b0">2</div>
<div class="t" style="left:725px;width:24.5px;text-align:right;top:225.08px;font-size:9.5px;line-height:12px;color:#3572b0">3</div>
<div class="t" style="left:725px;width:24.5px;text-align:right;top:237.52px;font-size:9.5px;line-height:12px;color:#3572b0">4</div>
<div class="t" style="left:725px;width:24.5px;text-align:right;top:249.96px;font-size:9.5px;line-height:12px;color:#3572b0">5</div>
<div class="t" style="left:725px;width:24.5px;text-align:right;top:262.40px;font-size:9.5px;line-height:12px;color:#3572b0">6</div>
<div class="t" style="left:725px;width:24.5px;text-align:right;top:274.84px;font-size:9.5px;line-height:12px;color:#3572b0">7</div>
<div class="t" style="left:725px;width:24.5px;text-align:right;top:287.28px;font-size:9.5px;line-height:12px;color:#3572b0">8</div>
<div class="t" style="left:725px;width:24.5px;text-align:right;top:299.72px;font-size:9.5px;line-height:12px;color:#3572b0">9</div>
<div class="t" style="left:725px;width:24.5px;text-align:right;top:312.16px;font-size:9.5px;line-height:12px;color:#3572b0">10</div>
<div class="t" style="left:725px;width:24.5px;text-align:right;top:324.60px;font-size:9.5px;line-height:12px;color:#3572b0">11</div>
<div class="t" style="left:725px;width:24.5px;text-align:right;top:337.04px;font-size:9.5px;line-height:12px;color:#3572b0">12</div>
<div class="b" style="left:765px;top:201px;width:1px;height:11px;background:#555;"></div>
<svg class="b" style="left:764px;top:449px" width="8" height="9"><path d="M6 0.5 L6 8.5 L1.5 4.5 Z" fill="#777"/></svg>
<div class="b" style="left:778px;top:450px;width:217px;height:8px;background:#8a8a8a;border-radius:4px;"></div>
<svg class="b" style="left:1094px;top:449px" width="8" height="9"><path d="M1.5 0.5 L1.5 8.5 L6 4.5 Z" fill="#777"/></svg>
<div class="t" style="left:724px;top:473.11px;font-size:10.5px;color:#5a5a5a;letter-spacing:-0.491px;">Parsed Result:</div>
<div class="b" style="left:724px;top:488px;width:134px;height:174px;background:#fff;border:1px solid #d6d6d6;"></div>
<div class="b" style="left:725px;top:489px;width:132px;height:19px;background:#b4d9f3;"></div>
<div class="b" style="left:867px;top:488px;width:241px;height:174px;background:#fff;border:1px solid #d6d6d6;"></div>
<div class="b" style="left:868px;top:489px;width:239px;height:24px;background:#f2f2f2;"></div>
<div class="b" style="left:868px;top:512px;width:239px;height:1px;background:#dcdcdc;"></div>
<div class="b" style="left:947px;top:489px;width:1px;height:24px;background:#dcdcdc;"></div>
<div class="b" style="left:1027px;top:489px;width:1px;height:24px;background:#dcdcdc;"></div>
<div class="t" style="left:871px;top:494.11px;font-size:10.5px;color:#333;letter-spacing:-0.094px;-webkit-text-stroke:0.35px #333;">Variable</div>
<div class="t" style="left:951px;top:494.11px;font-size:10.5px;color:#333;letter-spacing:-0.116px;-webkit-text-stroke:0.35px #333;">Value</div>
<div class="t" style="left:1031px;top:494.11px;font-size:10.5px;color:#333;letter-spacing:-0.316px;-webkit-text-stroke:0.35px #333;">Type</div>
<svg class="b" style="left:726px;top:495px" width="6" height="6"><path d="M5.5 0.5 L5.5 5.5 L0.5 5.5 Z" fill="#333"/></svg>
<svg class="b" style="left:733.5px;top:493.5px" width="10" height="10"><rect x="0.6" y="0.6" width="8.8" height="8.8" fill="#e3f1fb" stroke="#4a98d8" stroke-width="1.2"/><rect x="1.2" y="1.2" width="7.6" height="1.6" fill="#4a98d8"/><path d="M3.3 4.3 L6.7 7.7 M6.7 4.3 L3.3 7.7" stroke="#2a78c0" stroke-width="0.9"/></svg>
<div class="t" style="left:746px;top:492.61px;font-size:10.5px;color:#333;letter-spacing:-0.264px;">_original_result</div>
<svg class="b" style="left:743px;top:514px" width="6" height="6"><path d="M5.5 0.5 L5.5 5.5 L0.5 5.5 Z" fill="#333"/></svg>
<svg class="b" style="left:751.5px;top:512.5px" width="10" height="10"><rect x="0.6" y="0.6" width="8.8" height="8.8" fill="#e3f1fb" stroke="#4a98d8" stroke-width="1.2"/><rect x="1.2" y="1.2" width="7.6" height="1.6" fill="#4a98d8"/><path d="M3.3 4.3 L6.7 7.7 M6.7 4.3 L3.3 7.7" stroke="#2a78c0" stroke-width="0.9"/></svg>
<div class="t" style="left:763px;top:511.61px;font-size:10.5px;color:#333;letter-spacing:-0.492px;">Table1</div>
<svg class="b" style="left:767.5px;top:531.5px" width="10" height="10"><rect x="0.6" y="0.6" width="8.8" height="8.8" fill="#e3f1fb" stroke="#4a98d8" stroke-width="1.2"/><rect x="1.2" y="1.2" width="7.6" height="1.6" fill="#4a98d8"/><path d="M3.3 4.3 L6.7 7.7 M6.7 4.3 L3.3 7.7" stroke="#2a78c0" stroke-width="0.9"/></svg>
<div class="t" style="left:780px;top:530.61px;font-size:10.5px;color:#333;">$neighbor</div>
<svg class="b" style="left:767.5px;top:550.5px" width="10" height="10"><rect x="0.6" y="0.6" width="8.8" height="8.8" fill="#e3f1fb" stroke="#4a98d8" stroke-width="1.2"/><rect x="1.2" y="1.2" width="7.6" height="1.6" fill="#4a98d8"/><path d="M3.3 4.3 L6.7 7.7 M6.7 4.3 L3.3 7.7" stroke="#2a78c0" stroke-width="0.9"/></svg>
<div class="t" style="left:780px;top:549.61px;font-size:10.5px;color:#333;">$interface</div>
<svg class="b" style="left:767.5px;top:569.5px" width="10" height="10"><rect x="0.6" y="0.6" width="8.8" height="8.8" fill="#e3f1fb" stroke="#4a98d8" stroke-width="1.2"/><rect x="1.2" y="1.2" width="7.6" height="1.6" fill="#4a98d8"/><path d="M3.3 4.3 L6.7 7.7 M6.7 4.3 L3.3 7.7" stroke="#2a78c0" stroke-width="0.9"/></svg>
<div class="t" style="left:780px;top:568.61px;font-size:10.5px;color:#333;">$uptime</div>
</body></html>
